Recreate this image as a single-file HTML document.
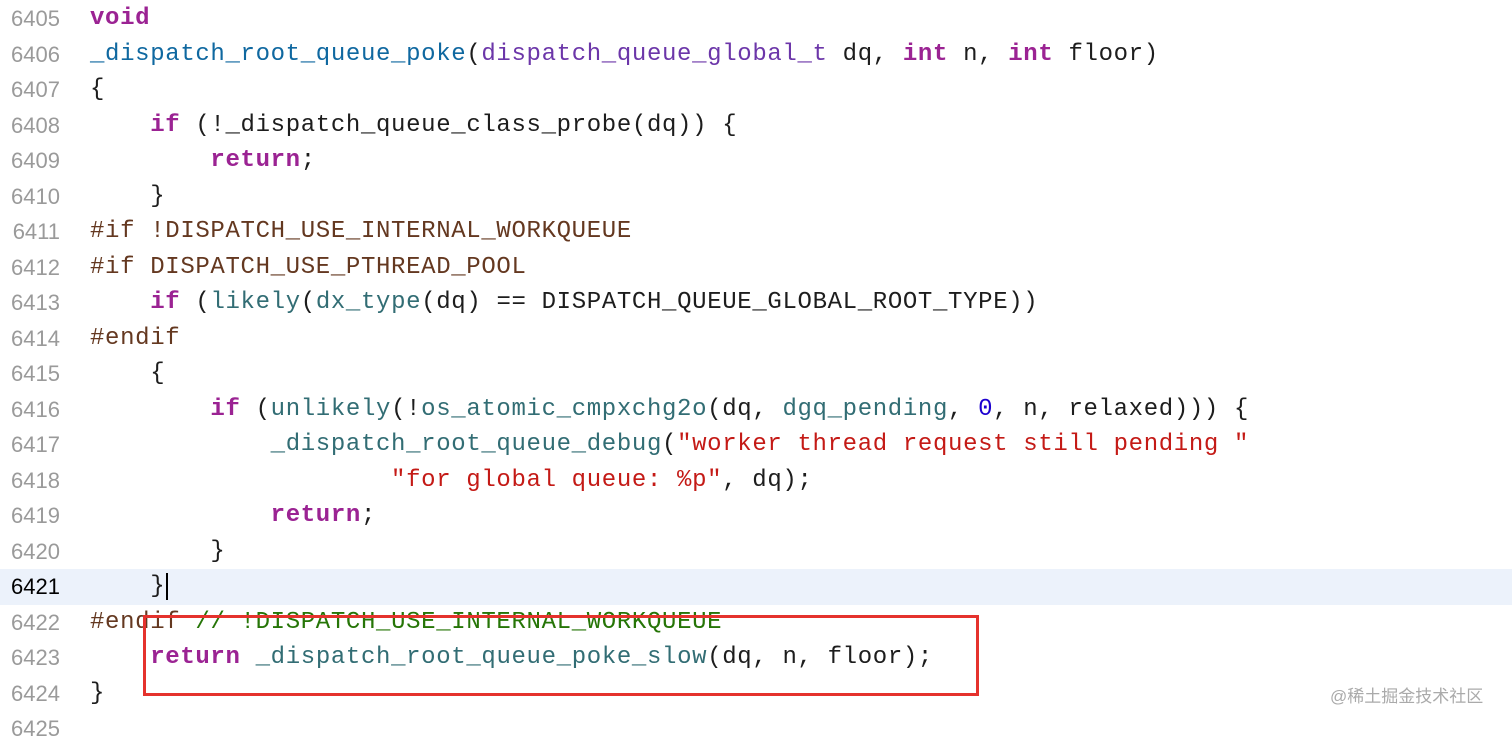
<!DOCTYPE html>
<html><head><meta charset="utf-8"><style>
body{margin:0;width:1512px;height:727px;overflow:hidden;background:#fff;position:relative;font-family:"Liberation Mono",monospace}
.l{position:absolute;left:0;width:1512px;height:35.5px;line-height:37px}
.n{position:absolute;right:1452px;font-family:"Liberation Sans",sans-serif;font-size:22px;color:#9a9a9a;text-align:right}
.c{position:absolute;left:90px;font-size:24px;letter-spacing:0.65px;white-space:pre;color:#1d1d1d}
.k{color:#9b2393;font-weight:bold}.f{color:#0f68a0}.t{color:#6c36a9}.m{color:#326d74}.p{color:#643820}.s{color:#c41a16}.d{color:#1c00cf}.g{color:#267507}
</style></head><body>
<div style="position:absolute;left:0;top:569px;width:1512px;height:36px;background:#ecf2fb"></div>
<div class="l" style="top:0"><span class="n">6405</span><span class="c"><span class="k">void</span></span></div>
<div class="l" style="top:35.5px"><span class="n">6406</span><span class="c"><span class="f">_dispatch_root_queue_poke</span>(<span class="t">dispatch_queue_global_t</span> dq, <span class="k">int</span> n, <span class="k">int</span> floor)</span></div>
<div class="l" style="top:71px"><span class="n">6407</span><span class="c">{</span></div>
<div class="l" style="top:106.5px"><span class="n">6408</span><span class="c">    <span class="k">if</span> (!_dispatch_queue_class_probe(dq)) {</span></div>
<div class="l" style="top:142px"><span class="n">6409</span><span class="c">        <span class="k">return</span>;</span></div>
<div class="l" style="top:177.5px"><span class="n">6410</span><span class="c">    }</span></div>
<div class="l" style="top:213px"><span class="n">6411</span><span class="c"><span class="p">#if !DISPATCH_USE_INTERNAL_WORKQUEUE</span></span></div>
<div class="l" style="top:248.5px"><span class="n">6412</span><span class="c"><span class="p">#if DISPATCH_USE_PTHREAD_POOL</span></span></div>
<div class="l" style="top:284px"><span class="n">6413</span><span class="c">    <span class="k">if</span> (<span class="m">likely</span>(<span class="m">dx_type</span>(dq) == DISPATCH_QUEUE_GLOBAL_ROOT_TYPE))</span></div>
<div class="l" style="top:319.5px"><span class="n">6414</span><span class="c"><span class="p">#endif</span></span></div>
<div class="l" style="top:355px"><span class="n">6415</span><span class="c">    {</span></div>
<div class="l" style="top:390.5px"><span class="n">6416</span><span class="c">        <span class="k">if</span> (<span class="m">unlikely</span>(!<span class="m">os_atomic_cmpxchg2o</span>(dq, <span class="m">dgq_pending</span>, <span class="d">0</span>, n, relaxed))) {</span></div>
<div class="l" style="top:426px"><span class="n">6417</span><span class="c">            <span class="m">_dispatch_root_queue_debug</span>(<span class="s">"worker thread request still pending "</span></span></div>
<div class="l" style="top:461.5px"><span class="n">6418</span><span class="c">                    <span class="s">"for global queue: %p"</span>, dq);</span></div>
<div class="l" style="top:497px"><span class="n">6419</span><span class="c">            <span class="k">return</span>;</span></div>
<div class="l" style="top:532.5px"><span class="n">6420</span><span class="c">        }</span></div>
<div class="l" style="top:568px"><span class="n" style="color:#000">6421</span><span class="c">    }<span style="border-left:2px solid #000;margin-left:1px"></span></span></div>
<div class="l" style="top:603.5px"><span class="n">6422</span><span class="c"><span class="p">#endif</span> <span class="g">// !DISPATCH_USE_INTERNAL_WORKQUEUE</span></span></div>
<div class="l" style="top:639px"><span class="n">6423</span><span class="c">    <span class="k">return</span> <span class="m">_dispatch_root_queue_poke_slow</span>(dq, n, floor);</span></div>
<div class="l" style="top:674.5px"><span class="n">6424</span><span class="c">}</span></div>
<div class="l" style="top:710px"><span class="n">6425</span></div>
<div style="position:absolute;left:143px;top:615px;width:830px;height:75px;border:3px solid #e5322d"></div>
<div style="position:absolute;left:1330px;top:682px;font-family:'Liberation Sans','Noto Sans CJK SC',sans-serif;font-size:17px;color:#aaa">@稀土掘金技术社区</div>
</body></html>
